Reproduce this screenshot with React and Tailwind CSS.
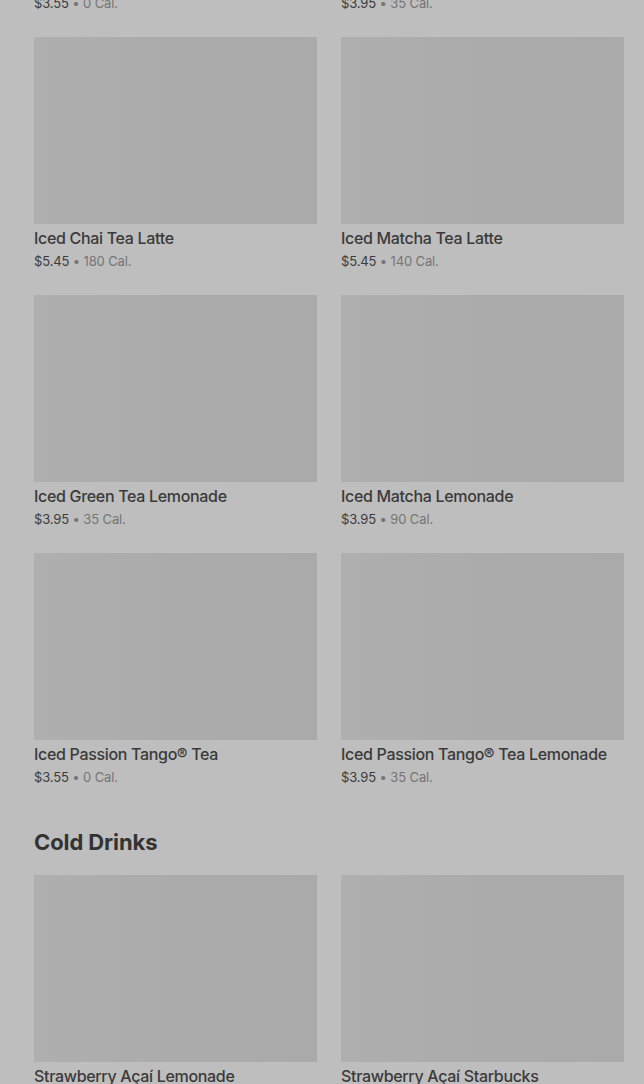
const prevRow = [
  { name: 'Iced Black Tea', price: '$3.55', cal: '0 Cal.' },
  { name: 'Iced Black Tea Lemonade', price: '$3.95', cal: '35 Cal.' },
]

const teas = [
  { name: 'Iced Chai Tea Latte', price: '$5.45', cal: '180 Cal.' },
  { name: 'Iced Matcha Tea Latte', price: '$5.45', cal: '140 Cal.' },
  { name: 'Iced Green Tea Lemonade', price: '$3.95', cal: '35 Cal.' },
  { name: 'Iced Matcha Lemonade', price: '$3.95', cal: '90 Cal.' },
  { name: 'Iced Passion Tango® Tea', price: '$3.55', cal: '0 Cal.' },
  { name: 'Iced Passion Tango® Tea Lemonade', price: '$3.95', cal: '35 Cal.' },
]

const coldDrinks = [
  { name: 'Strawberry Açaí Lemonade', price: '$4.45', cal: '140 Cal.' },
  { name: 'Strawberry Açaí Starbucks Refreshers® Beverage', price: '$4.25', cal: '100 Cal.' },
]

function ProductCard({ item }) {
  return (
    <div className="flex flex-col">
      <div className="h-[187px] w-full bg-gradient-to-r from-[#afafaf] via-[#ababab] to-[#aaaaaa]" />
      <p className="mt-[2px] text-[16px] leading-[24px] font-medium text-[#3a3a3a] tracking-[-0.02em]">
        {item.name}
      </p>
      <p className="mt-[1px] text-[13px] leading-[20px] tracking-[-0.01em]">
        <span className="text-[#3c3c3c]">{item.price}</span>
        <span className="text-[#757575]"> • {item.cal}</span>
      </p>
    </div>
  )
}

function Grid({ items }) {
  return (
    <div className="grid grid-cols-2 gap-x-6 gap-y-6">
      {items.map((item) => (
        <ProductCard key={item.name} item={item} />
      ))}
    </div>
  )
}

export default function App() {
  return (
    <div
      className="h-[1084px] overflow-hidden bg-[#bebebe] pl-[34px] pr-[20px]"
      style={{ fontFamily: "Inter, 'Noto Sans', sans-serif" }}
    >
      <div className="-mt-[221px]">
        <Grid items={[...prevRow, ...teas]} />
        <h2 className="mt-[41px] mb-[19px] text-[22px] leading-[28px] font-bold text-[#333333] tracking-[-0.005em]">
          Cold Drinks
        </h2>
        <Grid items={coldDrinks} />
      </div>
    </div>
  )
}
